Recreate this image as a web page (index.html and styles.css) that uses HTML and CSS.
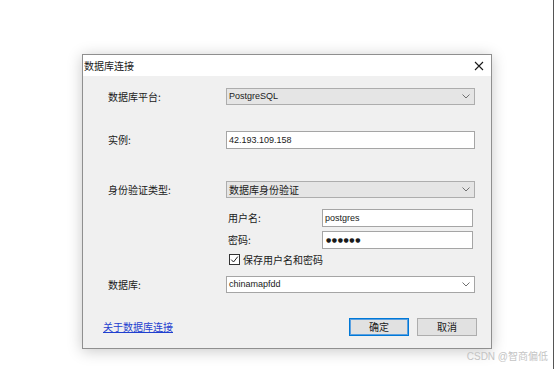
FILE: index.html
```html
<!DOCTYPE html>
<html lang="zh-CN">
<head>
    <meta charset="UTF-8">
    <meta name="viewport" content="width=device-width, initial-scale=1.0">
    <title>数据库连接</title>
    <link rel="stylesheet" href="styles.css">
</head>
<body>
    <div class="screen">
        <div class="dialog">
            <div class="titlebar">
                <span class="title">数据库连接</span>
                <svg class="close" width="10" height="10" viewBox="0 0 10 10">
                    <path d="M1 1 L9 9 M9 1 L1 9" stroke="#1a1a1a" stroke-width="1.1" fill="none"/>
                </svg>
            </div>

            <div class="content">
                <div class="row r-platform">
                    <span class="label">数据库平台:</span>
                    <div class="select">
                        <span class="latin">PostgreSQL</span>
                        <svg class="chev" width="8" height="5" viewBox="0 0 8 5"><path d="M0.5 0.5 L4 4 L7.5 0.5" stroke="#707070" fill="none"/></svg>
                    </div>
                </div>

                <div class="row r-instance">
                    <span class="label">实例:</span>
                    <div class="field"><span class="latin">42.193.109.158</span></div>
                </div>

                <div class="row r-auth">
                    <span class="label">身份验证类型:</span>
                    <div class="select">
                        <span>数据库身份验证</span>
                        <svg class="chev" width="8" height="5" viewBox="0 0 8 5"><path d="M0.5 0.5 L4 4 L7.5 0.5" stroke="#707070" fill="none"/></svg>
                    </div>
                </div>

                <div class="cred">
                    <span class="sublabel">用户名:</span>
                    <div class="field"><span class="latin">postgres</span></div>
                    <span class="sublabel">密码:</span>
                    <div class="field"><span class="dots">●●●●●●</span></div>
                    <label class="check">
                        <span class="box">
                            <svg width="9" height="9" viewBox="0 0 9 9"><path d="M1.2 4.6 L3.5 7 L7.8 1.6" stroke="#222" stroke-width="1" fill="none"/></svg>
                        </span>
                        保存用户名和密码
                    </label>
                </div>

                <div class="row r-db">
                    <span class="label">数据库:</span>
                    <div class="select combo">
                        <span class="latin">chinamapfdd</span>
                        <svg class="chev" width="8" height="5" viewBox="0 0 8 5"><path d="M0.5 0.5 L4 4 L7.5 0.5" stroke="#707070" fill="none"/></svg>
                    </div>
                </div>

                <div class="footer">
                    <a class="link" href="#">关于数据库连接</a>
                    <div class="buttons">
                        <button class="btn default">确定</button>
                        <button class="btn">取消</button>
                    </div>
                </div>
            </div>
        </div>

        <div class="watermark">CSDN @智商偏低</div>
    </div>
</body>
</html>
```

FILE: styles.css
```css
:root {
    --dialog-bg: #f0f0f0;
    --border: #adadad;
    --field-border: #a5a5a5;
    --text: #1a1a1a;
    --accent: #0078d7;
}
* {
    box-sizing: border-box;
}
body {
    margin: 0;
    background: #ffffff;
    font-family: "Noto Sans CJK SC", "Liberation Sans", sans-serif;
    font-size: 10px;
    color: var(--text);
}
.screen {
    position: relative;
    width: 554px;
    height: 369px;
    padding: 54px 0 0 82px;
    border-right: 1px solid #555;
    overflow: hidden;
}
.dialog {
    width: 410px;
    height: 295px;
    border: 1px solid #8f8f8f;
    background: var(--dialog-bg);
    box-shadow: 0 2px 14px rgba(0, 0, 0, 0.22);
    display: flex;
    flex-direction: column;
}
.titlebar {
    height: 21px;
    background: #ffffff;
    display: flex;
    align-items: center;
    justify-content: space-between;
    padding: 0 7px 0 1px;
}
.title {
    line-height: 1;
}
.content {
    padding: 12px 16px 0 20px;
}
.row {
    display: flex;
    align-items: center;
    padding-left: 5px;
}
.label {
    width: 118px;
    line-height: 1;
}
.latin {
    font-family: "Liberation Sans", sans-serif;
    font-size: 9px;
}
.select, .field {
    width: 249px;
    height: 18px;
    display: flex;
    align-items: center;
    justify-content: space-between;
    padding: 0 4px 0 2px;
    line-height: 1;
}
.select {
    background: #e5e5e5;
    border: 1px solid var(--border);
    height: 17px;
}
.select.combo {
    background: #ffffff;
    border-color: var(--field-border);
}
.field {
    background: #ffffff;
    border: 1px solid var(--field-border);
}
.r-instance {
    margin-top: 26px;
}
.r-auth {
    margin-top: 32px;
}
.cred {
    margin: 11px 0 0 125px;
    display: grid;
    grid-template-columns: 94px 151px;
    grid-template-rows: 18px 18px 16px;
    row-gap: 4px;
    align-items: center;
}
.cred .field {
    width: 151px;
}
.sublabel {
    line-height: 1;
}
.dots {
    font-family: "DejaVu Sans", sans-serif;
    font-size: 6px;
    letter-spacing: 0.6px;
    padding-left: 1px;
}
.check {
    grid-column: 1 / 3;
    display: flex;
    align-items: center;
    gap: 3px;
    margin-top: -3px;
    padding-left: 1px;
    line-height: 1;
}
.box {
    width: 11px;
    height: 11px;
    border: 1px solid #333;
    background: #ffffff;
    display: flex;
    align-items: center;
    justify-content: center;
}
.r-db {
    margin-top: 7px;
}
.footer {
    margin-top: 25px;
    display: flex;
    align-items: center;
    justify-content: space-between;
}
.link {
    color: #1f3fcf;
    text-decoration: underline;
    line-height: 1;
}
.buttons {
    display: flex;
    gap: 8px;
    margin-right: -2px;
}
.btn {
    width: 60px;
    height: 18px;
    padding: 0;
    background: #e1e1e1;
    border: 1px solid var(--border);
    font-family: "Noto Sans CJK SC", sans-serif;
    font-size: 10px;
    color: var(--text);
    line-height: 1;
}
.btn.default {
    border: 1px solid var(--accent);
    box-shadow: inset 0 0 0 1px #5aa0e0;
}
.watermark {
    position: absolute;
    right: 5px;
    bottom: 6px;
    font-family: "Liberation Sans", "Noto Sans CJK SC", sans-serif;
    font-size: 10px;
    color: #c4c4c4;
}
```
